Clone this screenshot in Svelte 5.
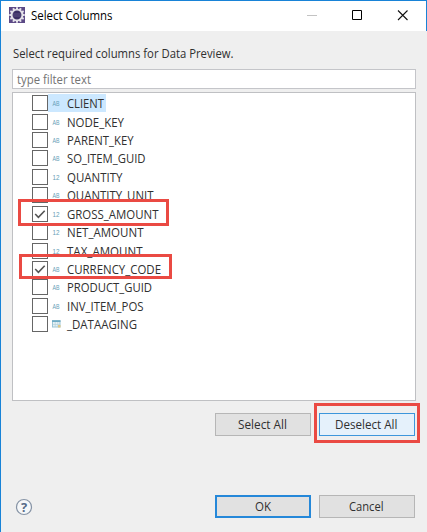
<script>
  const rows = [
    { name: 'CLIENT', w: 37, type: 'AB', selected: true },
    { name: 'NODE_KEY', w: 57, type: 'AB' },
    { name: 'PARENT_KEY', w: 66.5, type: 'AB' },
    { name: 'SO_ITEM_GUID', w: 78.5, type: 'AB' },
    { name: 'QUANTITY', w: 55.5, type: '12' },
    { name: 'QUANTITY_UNIT', w: 86.5, type: 'AB' },
    { name: 'GROSS_AMOUNT', w: 91.5, type: '12', checked: true },
    { name: 'NET_AMOUNT', w: 76.5, type: '12' },
    { name: 'TAX_AMOUNT', w: 75.5, type: '12' },
    { name: 'CURRENCY_CODE', w: 94, type: 'AB', checked: true },
    { name: 'PRODUCT_GUID', w: 85, type: 'AB' },
    { name: 'INV_ITEM_POS', w: 76.5, type: 'AB' },
    { name: '_DATAAGING', w: 70, type: 'table' }
  ];
  const teeth = [0, 30, 60, 90, 120, 150, 180, 210, 240, 270, 300, 330];
</script>

{#snippet label(text, w, size, h = 18, base = 13)}
  <svg class="label" width={w + 1} height={h}>
    <text x="0" y={base} font-size={size} textLength={w} lengthAdjust="spacingAndGlyphs">{text}</text>
  </svg>
{/snippet}

<div class="window">
  <header>
    <svg class="logo" width="16" height="16" viewBox="0 0 16 16">
      <rect width="16" height="16" fill="#5c4a86" />
      <g fill="#e8e6ec">
        {#each teeth as a}
          <rect x="7" y="0.3" width="2" height="3" transform="rotate({a} 8 8)" />
        {/each}
      </g>
      <circle cx="8" cy="8" r="5.4" fill="#3b2f63" stroke="#e4e2e8" stroke-width="1.9" />
      <path d="M4 7h8M4 9h8" stroke="#66598c" stroke-width=".8" />
    </svg>
    <div class="title">{@render label('Select Columns', 81.5, 12, 18, 13)}</div>
    <svg class="controls" width="103" height="12">
      <path d="M0 5.5h10" stroke="#c3c3c3" />
      <path d="M45.5 .5h9v9h-9z" fill="none" stroke="#000" />
      <path d="M91 .5l9.5 9.5M100.5 .5l-9.5 9.5" stroke="#111" stroke-width="1.1" />
    </svg>
  </header>

  <main>
    <div class="prompt">{@render label('Select required columns for Data Preview.', 220.5, 12.3, 18, 13)}</div>
    <div class="filter">{@render label('type filter text', 74, 12.3, 18, 13.5)}</div>
    <div class="list">
      {#each rows as row}
        <div class="row">
          <span class="box">
            {#if row.checked}
              <svg width="14" height="14"><path d="M2.2 7l3.2 3.3 6.3-6.6" fill="none" stroke="#555" stroke-width="1.6" /></svg>
            {/if}
          </span>
          <div class="item" class:selected={row.selected}>
            {#if row.type === 'table'}
              <svg class="type" width="9" height="8">
                <rect x=".5" y=".5" width="7.5" height="6.5" fill="#e5f0f4" stroke="#9cc5d5" />
                <path d="M0 1.2h8.5" stroke="#6eabc5" stroke-width="1.6" />
                <path d="M3.2 2v5M5.8 2v5M1 4.5h7" stroke="#b5d2dd" stroke-width=".7" />
                <rect x="6" y="5" width="2.5" height="2.5" fill="#dfc888" />
              </svg>
            {:else}
              <svg class="type" width="9" height="8">
                <text x=".5" y="6.5" font-size="7" textLength="7" lengthAdjust="spacingAndGlyphs">{row.type}</text>
              </svg>
            {/if}
            {@render label(row.name, row.w, 12.7, 18, 13.5)}
          </div>
        </div>
      {/each}
    </div>
    <div class="buttons">
      <button>{@render label('Select All', 49, 12.3)}</button>
      <button class="hover">{@render label('Deselect All', 62.5, 12.3)}</button>
    </div>
    <footer>
      <svg width="18" height="18">
        <circle cx="9" cy="9" r="7.5" fill="#f5f7f9" stroke="#8794a6" stroke-width="1.2" />
        <text class="question" x="9" y="13.6" text-anchor="middle" font-size="13">?</text>
      </svg>
      <div class="actions">
        <button class="primary">{@render label('OK', 16, 12.3)}</button>
        <button>{@render label('Cancel', 34.5, 12.3)}</button>
      </div>
    </footer>
  </main>
  <div class="mark gross"></div>
  <div class="mark currency"></div>
  <div class="mark deselect"></div>
</div>

<style>
  :global(body) { margin: 0; }
  .window, .window * { box-sizing: border-box; }
  .window {
    position: relative;
    width: 427px;
    height: 532px;
    overflow: hidden;
    background: #efefef;
    border-top: 1px solid #1883d7;
    border-left: 1px solid #1883d7;
    font-family: "Open Sans", "Noto Sans", sans-serif;
  }
  svg { display: block; flex: none; }
  .label { overflow: visible; }
  .label text { fill: #303030; }
  header {
    display: flex;
    height: 30px;
    background: #fff;
    border-right: 1px solid #1883d7;
    padding: 6px 16px 0 8px;
  }
  .title { margin-left: 5.5px; }
  .title .label text, .title :global(text) { fill: #000; }
  .controls { margin: 3px 0 0 auto; }
  main { padding: 14px 11px 0; }
  .prompt { height: 24px; padding-left: .5px; }
  .filter {
    width: 404px;
    height: 20px;
    background: #fff;
    border: 1px solid #c4c5c9;
    padding-left: 4px;
  }
  .filter :global(text) { fill: #747474; }
  .list {
    width: 404px;
    height: 309px;
    margin-top: 3px;
    padding: 1px 0 0 19px;
    background: #fff;
    border: 1px solid #bfc0c3;
  }
  .row { display: flex; height: 18.43px; align-items: center; }
  .box { width: 16px; height: 16px; border: 1px solid #666; background: #fff; flex: none; }
  .item { display: flex; align-items: center; height: 18.43px; padding: 0 1px 0 4px; }
  .selected { background: #cce8ff; }
  .type { margin-right: 5.5px; }
  .type text { font-family: "Liberation Sans", sans-serif; fill: #65a0b6; }
  .buttons { display: flex; gap: 8px; margin: 12px 0 0 203px; }
  button {
    display: flex;
    justify-content: center;
    align-items: center;
    width: 96px;
    height: 23px;
    padding: 0;
    background: #e1e1e1;
    border: 1px solid #b6b6b6;
    font: inherit;
  }
  .hover { background: #e5f1fb; border-color: #3d96db; }
  .primary { border: 2px solid #2588d9; }
  footer { display: flex; align-items: center; margin: 59px 0 0 3px; }
  .question { font-family: "Open Sans", sans-serif; font-weight: 700; fill: #566b88; }
  .actions { display: flex; gap: 8px; margin-left: 182px; }
  .mark { position: absolute; border: 3px solid #ea4a43; }
  .gross { left: 17px; top: 198px; width: 151px; height: 27px; }
  .currency { left: 18px; top: 253px; width: 153px; height: 25px; }
  .deselect { left: 313px; top: 402px; width: 106px; height: 40px; }
</style>
